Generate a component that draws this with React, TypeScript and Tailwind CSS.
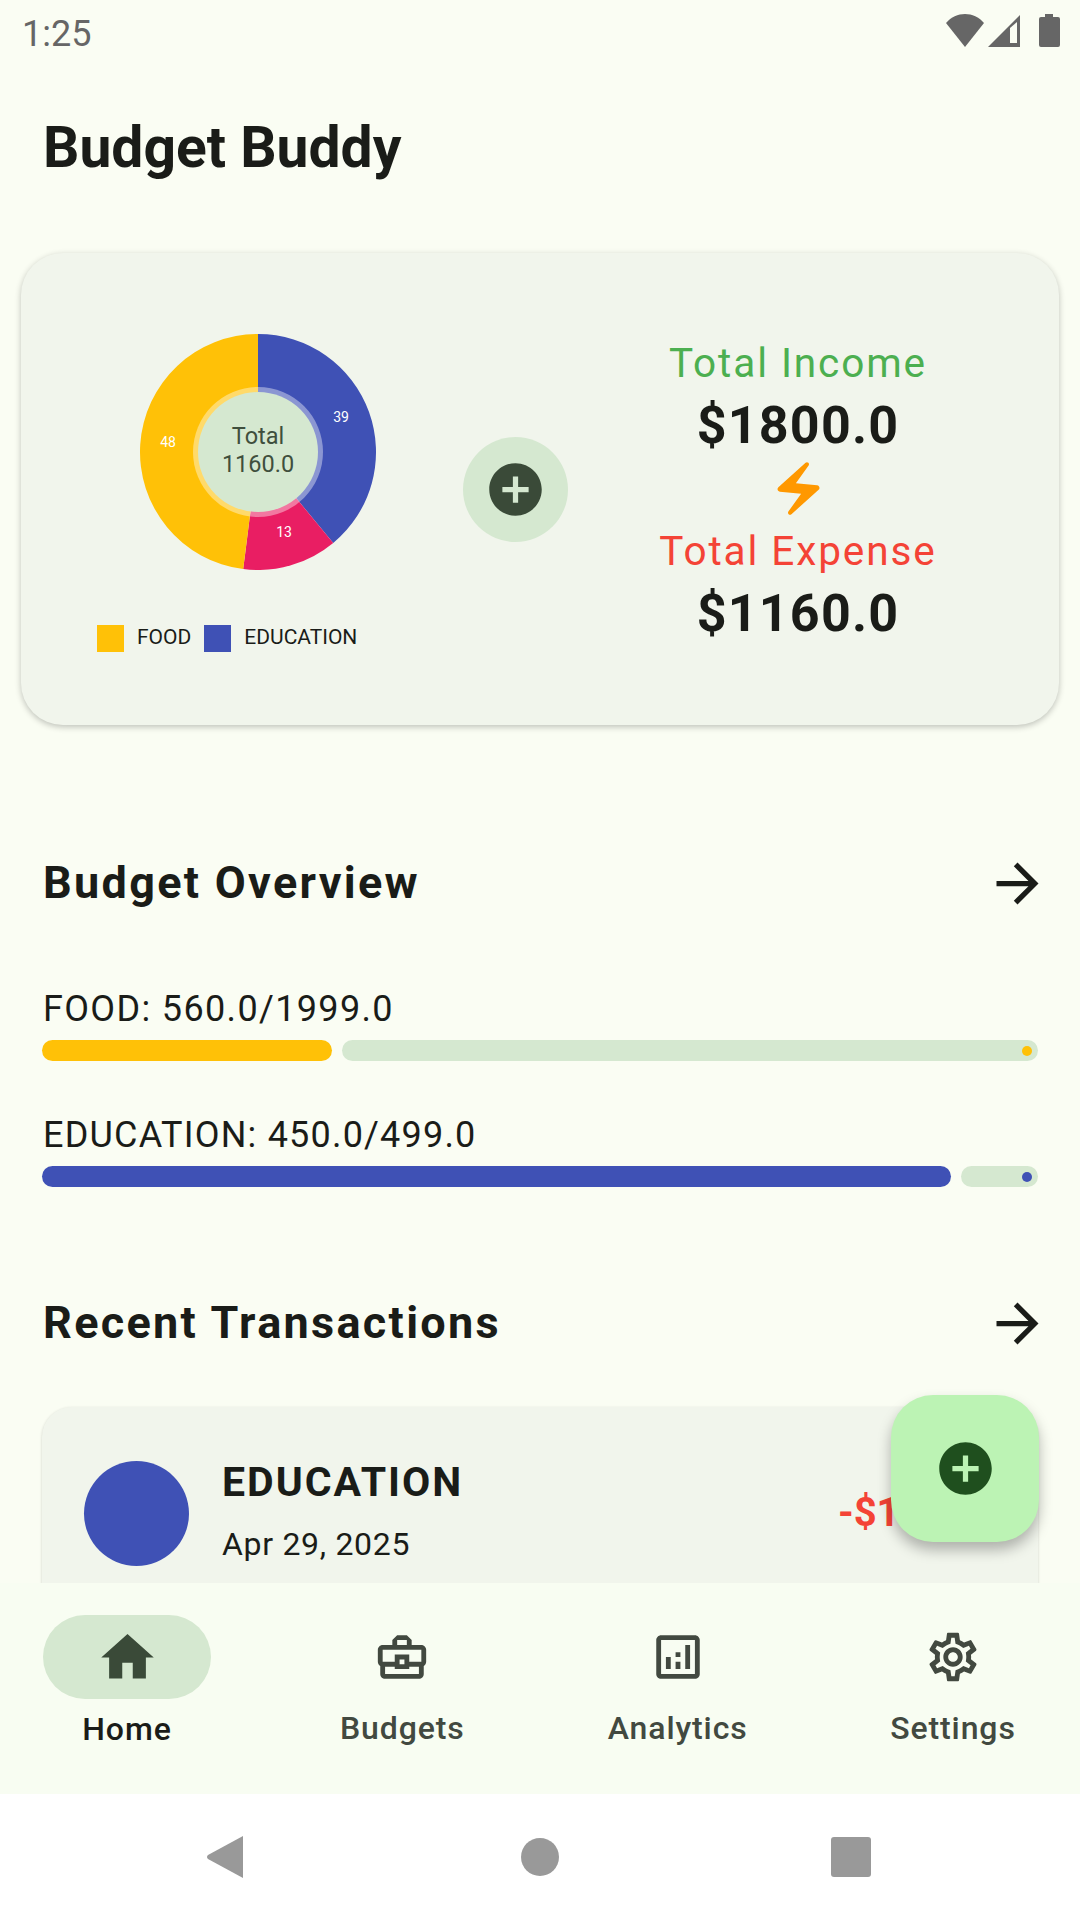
import React from "react";
import { MdHome, MdOutlineBusinessCenter, MdOutlineAnalytics, MdOutlineSettings, MdAddCircle, MdArrowForward, MdElectricBolt } from "react-icons/md";

const f = { fontFamily: "Roboto, sans-serif" };

function polar(r: number, a: number) {
  const t = ((a - 90) * Math.PI) / 180;
  return [118 + r * Math.cos(t), 118 + r * Math.sin(t)];
}
function slice(a0: number, a1: number) {
  const [x0, y0] = polar(118, a0);
  const [x1, y1] = polar(118, a1);
  const large = a1 - a0 > 180 ? 1 : 0;
  return `M118 118 L${x0} ${y0} A118 118 0 ${large} 1 ${x1} ${y1} Z`;
}

function Donut() {
  return (
    <svg width="236" height="236" viewBox="0 0 236 236" className="self-center">
      <path d={slice(0, 140.4)} fill="#3f51b5" />
      <path d={slice(140.4, 187.2)} fill="#e91e63" />
      <path d={slice(187.2, 360)} fill="#ffc107" />
      <circle cx="118" cy="118" r="65" fill="#ffffff" fillOpacity="0.4" />
      <circle cx="118" cy="118" r="60" fill="#d5e8d0" />
      <text x="28" y="113" fontSize="14" fill="#fff" textAnchor="middle" fontFamily="Roboto">48</text>
      <text x="201" y="88" fontSize="14" fill="#fff" textAnchor="middle" fontFamily="Roboto">39</text>
      <text x="144" y="203" fontSize="14" fill="#fff" textAnchor="middle" fontFamily="Roboto">13</text>
      <text x="118" y="110" fontSize="23.5" fill="#3f4f3d" textAnchor="middle" fontFamily="Roboto">Total</text>
      <text x="118" y="138" fontSize="23.5" fill="#3f4f3d" textAnchor="middle" fontFamily="Roboto">1160.0</text>
    </svg>
  );
}

function Budget({ label, pct, color, mt, track }: { label: string; pct: number; color: string; mt: string; track: string }) {
  return (
    <div className={`px-[42px] ${mt}`}>
      <div className={`pl-[1px] text-[36px] leading-[44px] text-[#1a1c18] ${track}`}>{label}</div>
      <div className="mt-[9px] flex h-[21px] gap-[10px]">
        <div className="rounded-full" style={{ width: pct, backgroundColor: color }} />
        <div className="relative flex-1 rounded-full bg-[#d5e8d0]">
          <div className="absolute right-[6px] top-[5.5px] h-[10px] w-[10px] rounded-full" style={{ backgroundColor: color }} />
        </div>
      </div>
    </div>
  );
}

function SectionHead({ title, mt }: { title: string; mt: string }) {
  return (
    <div className={`flex h-[64px] items-center justify-between pl-[43px] pr-[31px] ${mt}`}>
      <div className="text-[45px] font-bold leading-[64px] tracking-[2.3px] text-[#1a1c18]">{title}</div>
      <MdArrowForward size={63} color="#1a1c18" />
    </div>
  );
}

function NavItem({ icon, label, active }: { icon: React.ReactNode; label: string; active?: boolean }) {
  return (
    <div className="flex w-[168px] flex-col items-center">
      <div className={`flex h-[84px] w-[168px] items-center justify-center rounded-full ${active ? "bg-[#d5e8d0]" : ""}`}>{icon}</div>
      <div className={`whitespace-nowrap text-[32px] leading-[40px] tracking-[0.9px] ${active ? "mt-[10px] font-medium text-[#1a1c18]" : "mt-[9px] font-medium text-[#424940]"}`}>{label}</div>
    </div>
  );
}

export default function App() {
  return (
    <div className="flex h-[1920px] w-[1080px] flex-col overflow-hidden bg-[#fafdf3]" style={f}>
      <div className="flex h-[63px] shrink-0 items-center justify-between pl-[22px] pr-[20px]">
        <div className="pt-[5px] text-[36px] leading-[63px] text-[#666666]">1:25</div>
        <div className="mb-[2px] flex items-center">
          <svg width="38" height="33" viewBox="0 0 38 33"><path d="M19 33 L0 9 C5 3 12 0 19 0 C26 0 33 3 38 9 Z" fill="#666" /></svg>
          <svg width="32" height="33" viewBox="0 0 32 33" className="ml-[4px]"><path d="M32 1 V33 H0 Z" fill="#666" /><path d="M22 14 L29 8 V29 H22 Z" fill="#fafdf3" /></svg>
          <svg width="21" height="33" viewBox="0 0 21 33" className="ml-[19px]"><path d="M6 0 H14 V3 H19 Q21 3 21 5 V31 Q21 33 19 33 H2 Q0 33 0 31 V5 Q0 3 2 3 H6 Z" fill="#666" /></svg>
        </div>
      </div>

      <div className="relative flex-1 overflow-hidden">
        <div className="pl-[43px] pt-[49px] text-[57px] font-bold leading-[72px] text-[#1a1c18]">Budget Buddy</div>

        <div className="mx-[21px] mt-[69px] flex h-[472px] items-center rounded-[42px] bg-[#f1f5ec] shadow-[0_2px_6px_rgba(0,0,0,0.24)]">
          <div className="ml-[76px] mt-[7px] flex w-[322px] flex-col">
            <Donut />
            <div className="mt-[55px] flex h-[27px] items-center text-[21px] text-[#1a1c18]">
              <div className="h-[27px] w-[27px] bg-[#ffc107]" />
              <div className="ml-[13px]">FOOD</div>
              <div className="ml-[13px] h-[27px] w-[27px] bg-[#3f51b5]" />
              <div className="ml-[13px]">EDUCATION</div>
            </div>
          </div>
          <div className="ml-[44px] flex h-[105px] w-[105px] items-center justify-center rounded-full bg-[#d5e8d0]">
            <MdAddCircle size={63} color="#3a4a38" />
          </div>
          <div className="mb-[2px] flex w-[460px] flex-col items-center leading-[62px]">
            <div className="-mt-[1px] h-[62px] text-[40.5px] tracking-[1.9px] text-[#4caf50]">Total Income</div>
            <div className="mt-[1px] h-[62px] text-[52px] font-bold tracking-[1.2px] text-[#1a1c18]">$1800.0</div>
            <MdElectricBolt size={63} color="#ff9800" />
            <div className="h-[62px] text-[40.5px] tracking-[1.9px] text-[#f44336]">Total Expense</div>
            <div className="h-[62px] pt-[1px] text-[52px] font-bold tracking-[1.2px] text-[#1a1c18]">$1160.0</div>
          </div>
        </div>

        <SectionHead title="Budget Overview" mt="mt-[126px]" />
        <Budget label="FOOD: 560.0/1999.0" pct={290} color="#ffc107" mt="mt-[72px]" track="tracking-[1.35px]" />
        <Budget label="EDUCATION: 450.0/499.0" pct={909} color="#3f51b5" mt="mt-[52px]" track="tracking-[1.2px]" />
        <SectionHead title="Recent Transactions" mt="mt-[104px]" />

        <div className="mx-[42px] mt-[52px] flex h-[216px] rounded-[30px] bg-[#f1f5ec] pl-[42px] pt-[54px] shadow-[0_1px_3px_rgba(0,0,0,0.18)]">
          <div className="h-[105px] w-[105px] rounded-full bg-[#3f51b5]" />
          <div className="ml-[33px] -mt-[5px]">
            <div className="text-[41px] font-bold leading-[52px] tracking-[2px] text-[#1a1c18]">EDUCATION</div>
            <div className="mt-[16px] text-[32px] leading-[40px] tracking-[0.7px] text-[#1a1c18]">Apr 29, 2025</div>
          </div>
          <div className="ml-auto mr-[58px] mt-[28px] text-[40px] font-bold leading-[48px] text-[#f44336]">-$150.0</div>
        </div>

        <div className="absolute left-[891px] top-[1332px] flex h-[147px] w-[148px] items-center justify-center rounded-[42px] bg-[#bcf3b4] shadow-[0_8px_14px_rgba(0,0,0,0.28)]">
          <MdAddCircle size={63} color="#1f4f1e" />
        </div>
      </div>

      <div className="flex h-[211px] shrink-0 items-start justify-between bg-[#f8fdf2] px-[43px] pt-[32px]">
        <NavItem active label="Home" icon={<MdHome size={63} color="#3a4a38" />} />
        <NavItem label="Budgets" icon={<MdOutlineBusinessCenter size={58} color="#424940" />} />
        <NavItem label="Analytics" icon={<MdOutlineAnalytics size={58} color="#424940" />} />
        <NavItem label="Settings" icon={<MdOutlineSettings size={58} color="#424940" />} />
      </div>

      <div className="relative flex h-[126px] shrink-0 items-center justify-center bg-white">
        <svg width="36" height="42" viewBox="0 0 36 42" className="absolute left-[207px] top-[42px]"><path d="M36 0 V42 L1 23 Q-1 21 1 19 Z" fill="#999" /></svg>
        <div className="absolute left-[521px] top-[44px] h-[38px] w-[38px] rounded-full bg-[#999]" />
        <div className="absolute left-[831px] top-[43px] h-[40px] w-[40px] rounded-[3px] bg-[#999]" />
      </div>
    </div>
  );
}
